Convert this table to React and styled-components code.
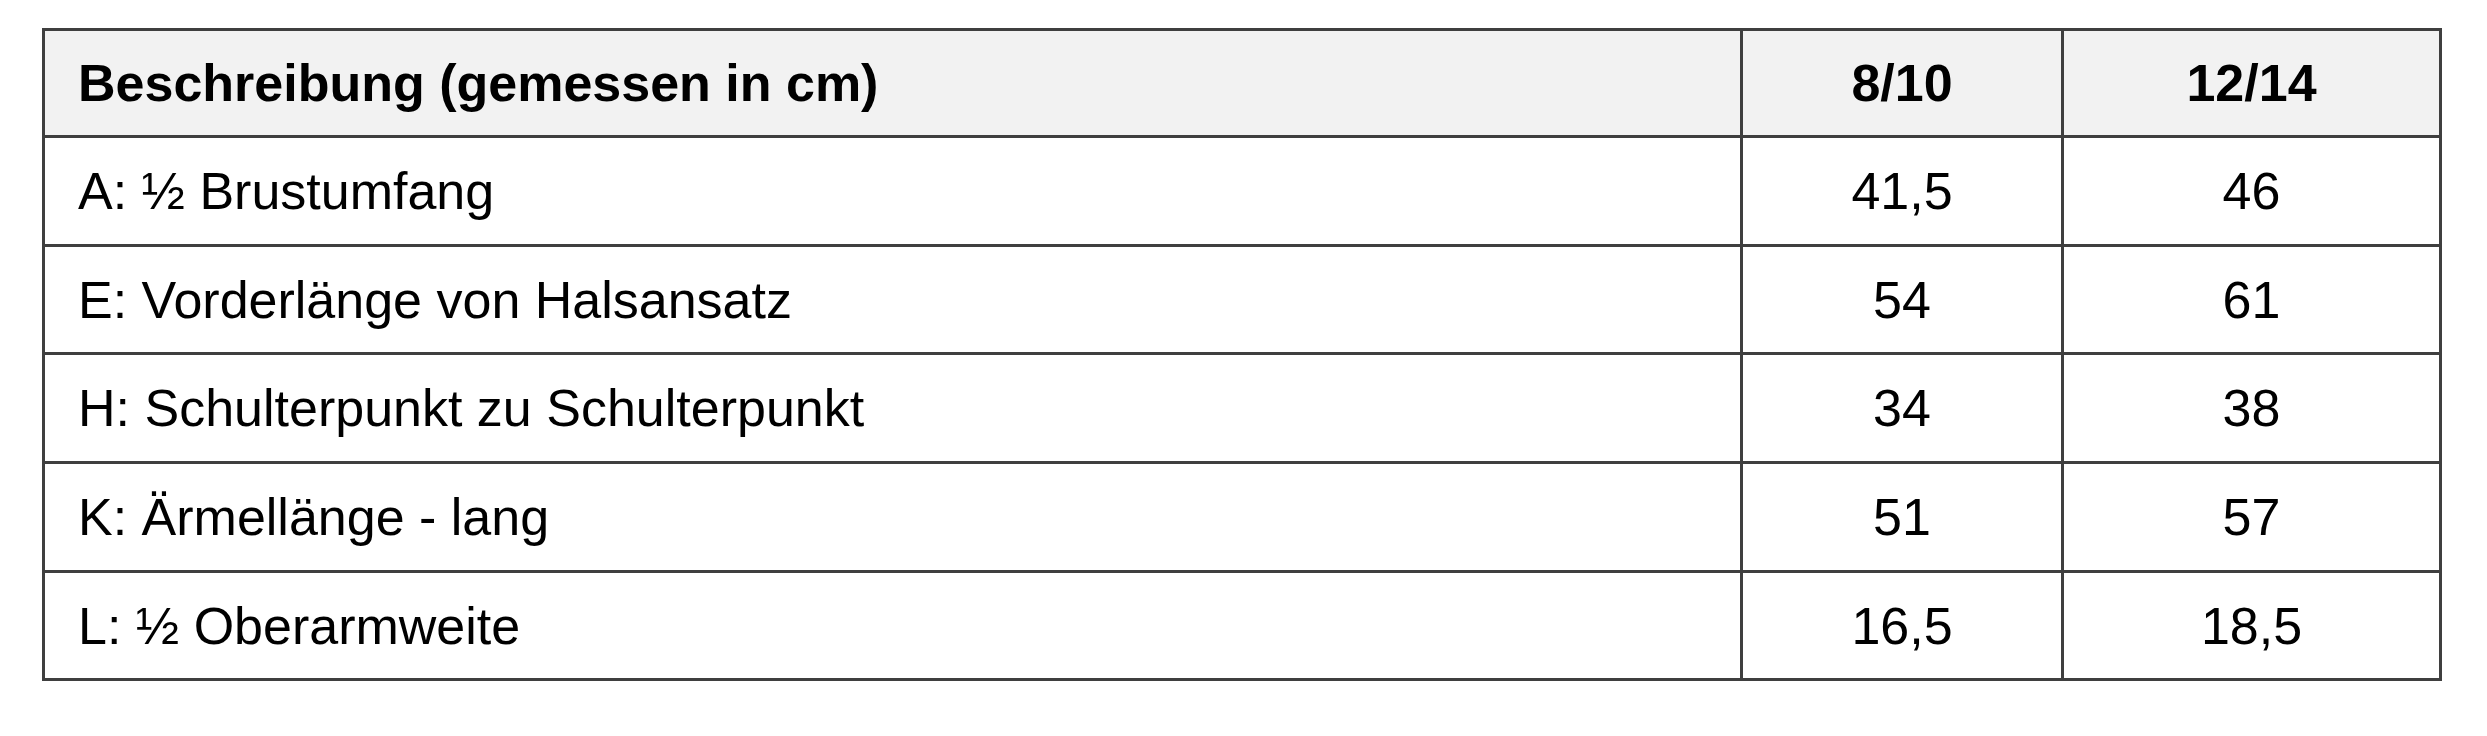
import React from 'react';
import styled, { createGlobalStyle } from 'styled-components';

const GlobalStyle = createGlobalStyle`
  html, body {
    margin: 0;
    padding: 0;
    background: #ffffff;
  }
  body {
    font-family: "Liberation Sans", Arial, sans-serif;
    color: #000;
  }
`;

const Page = styled.div`
  width: 2487px;
  height: 736px;
  padding: 28px 0 0 42px;
  box-sizing: border-box;
  background: #fff;
`;

const Table = styled.table`
  border-collapse: collapse;
  table-layout: fixed;
  width: 2397px;
  font-family: "Liberation Sans", Arial, sans-serif;
  font-size: 52px;
`;

const HeadCell = styled.th`
  height: 104px;
  padding: 0 0 0 ${(p) => (p.$left ? '33px' : '0')};
  border: 3px solid #3f3f3f;
  background: #f2f2f2;
  font-weight: 700;
  text-align: ${(p) => (p.$left ? 'left' : 'center')};
  vertical-align: middle;
  color: #000;
`;

const Cell = styled.td`
  height: 105.7px;
  padding: 0 0 0 ${(p) => (p.$left ? '33px' : '0')};
  border: 3px solid #3f3f3f;
  background: #fff;
  font-weight: 400;
  text-align: ${(p) => (p.$left ? 'left' : 'center')};
  vertical-align: middle;
  color: #000;
`;

const rows = [
  ['A: ½ Brustumfang', '41,5', '46'],
  ['E: Vorderlänge von Halsansatz', '54', '61'],
  ['H: Schulterpunkt zu Schulterpunkt', '34', '38'],
  ['K: Ärmellänge - lang', '51', '57'],
  ['L: ½ Oberarmweite', '16,5', '18,5'],
];

export default function App() {
  return (
    <Page>
      <GlobalStyle />
      <Table>
        <colgroup>
          <col style={{ width: 1698 }} />
          <col style={{ width: 321 }} />
          <col style={{ width: 378 }} />
        </colgroup>
        <thead>
          <tr>
            <HeadCell $left>Beschreibung (gemessen in cm)</HeadCell>
            <HeadCell>8/10</HeadCell>
            <HeadCell>12/14</HeadCell>
          </tr>
        </thead>
        <tbody>
          {rows.map(([label, a, b]) => (
            <tr key={label}>
              <Cell $left>{label}</Cell>
              <Cell>{a}</Cell>
              <Cell>{b}</Cell>
            </tr>
          ))}
        </tbody>
      </Table>
    </Page>
  );
}
